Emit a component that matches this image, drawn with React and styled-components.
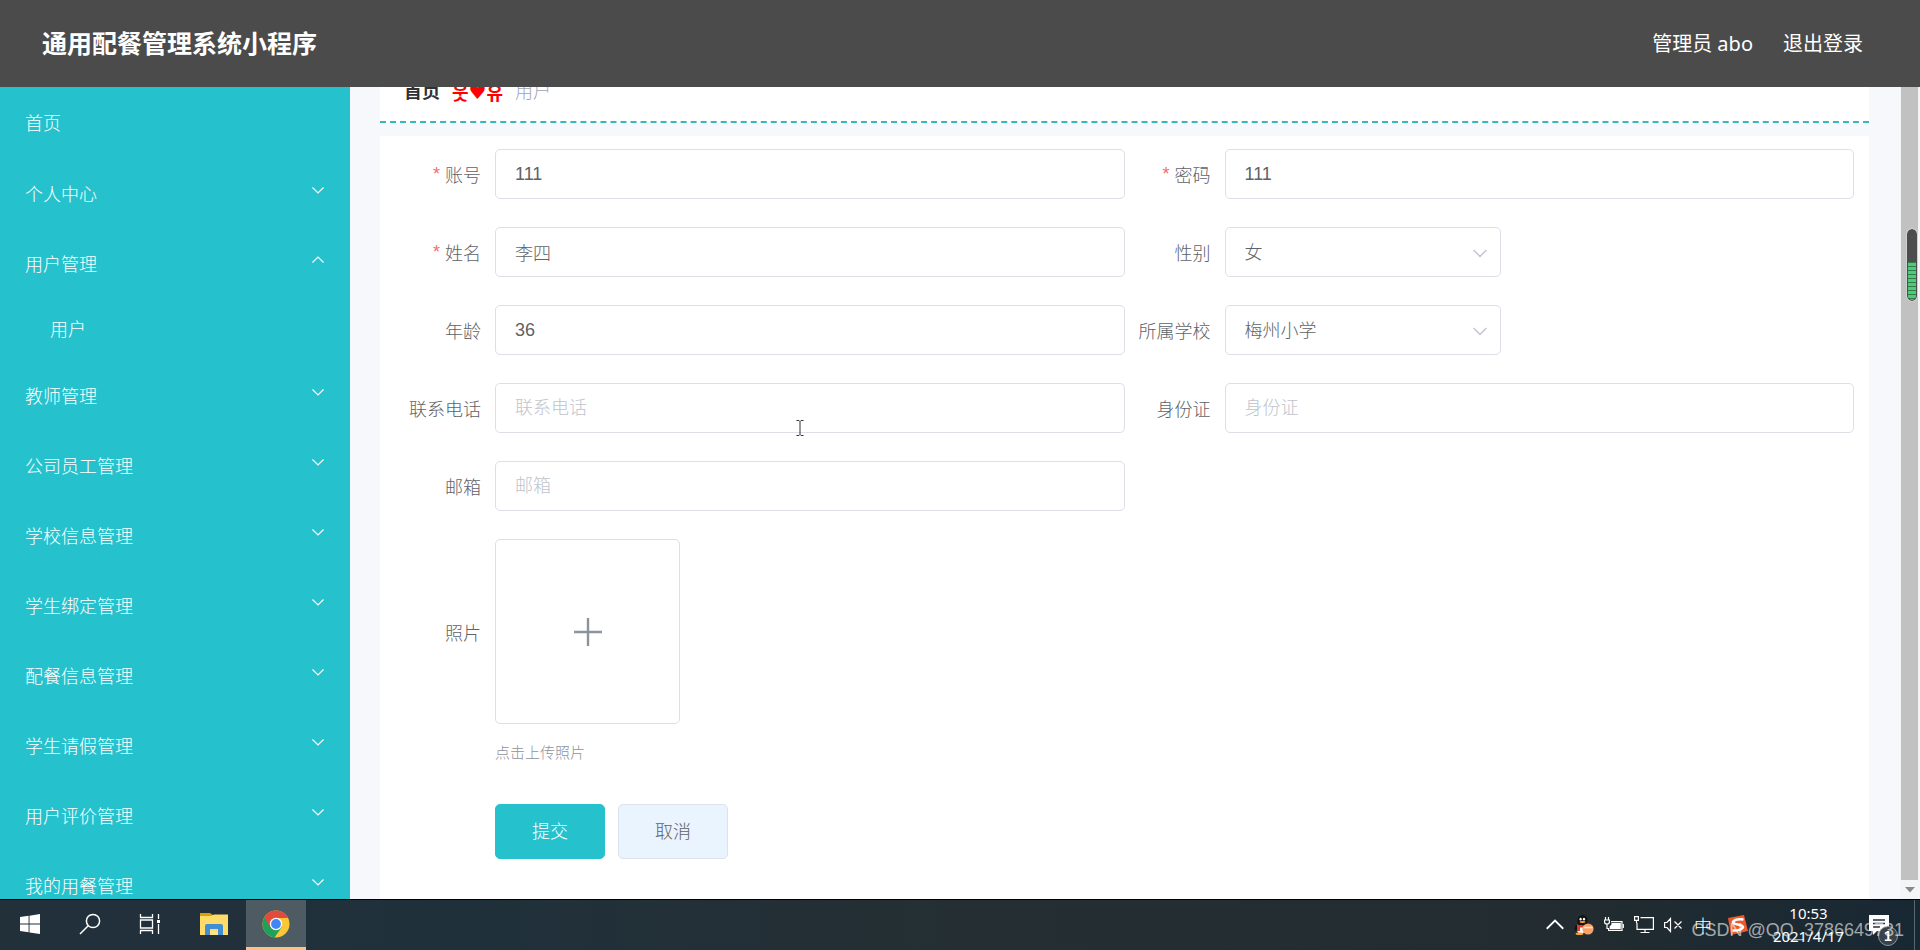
import { useState } from "react";
import styled, { createGlobalStyle } from "styled-components";

const menus = [
  { name: "首页" },
  { name: "个人中心", sub: ["个人信息"] },
  { name: "用户管理", sub: ["用户"] },
  { name: "教师管理", sub: ["教师"] },
  { name: "公司员工管理", sub: ["公司员工"] },
  { name: "学校信息管理", sub: ["学校信息"] },
  { name: "学生绑定管理", sub: ["学生绑定"] },
  { name: "配餐信息管理", sub: ["配餐信息"] },
  { name: "学生请假管理", sub: ["学生请假"] },
  { name: "用户评价管理", sub: ["用户评价"] },
  { name: "我的用餐管理", sub: ["我的用餐"] },
];

const Chevron = ({ up, size = 12 }) => (
  <svg width={size} height={size} viewBox="0 0 12 12" fill="none" stroke="currentColor">
    <path d={up ? "M0.5 8.5L6 3L11.5 8.5" : "M0.5 3.5L6 9L11.5 3.5"} strokeWidth="1.2" />
  </svg>
);

const TextField = ({ id, label, required, ...rest }) => (
  <Field>
    <Label htmlFor={id}>
      {required && <Star>*</Star>}
      {label}
    </Label>
    <Input id={id} {...rest} />
  </Field>
);

const SelectField = ({ id, label, options }) => (
  <Field>
    <Label htmlFor={id}>{label}</Label>
    <SelectBox>
      <Select id={id} defaultValue={options[0]}>
        {options.map((item) => (
          <option key={item}>{item}</option>
        ))}
      </Select>
      <SelectArrow>
        <Chevron size={14} />
      </SelectArrow>
    </SelectBox>
  </Field>
);

const SideMenu = () => {
  const [open, setOpen] = useState("用户管理");
  return (
    <Sidebar>
      {menus.map((menu) => (
        <div key={menu.name}>
          <MenuItem
            type="button"
            $first={!menu.sub}
            onClick={() => setOpen(open === menu.name ? "" : menu.name)}
          >
            {menu.name}
            {menu.sub && (
              <MenuArrow>
                <Chevron up={open === menu.name} />
              </MenuArrow>
            )}
          </MenuItem>
          {open === menu.name &&
            menu.sub?.map((item) => (
              <SubItem key={item} href="#">
                {item}
              </SubItem>
            ))}
        </div>
      ))}
    </Sidebar>
  );
};

const UserForm = () => (
  <Form onSubmit={(e) => e.preventDefault()}>
    <TextField id="account" label="账号" required defaultValue="111" />
    <TextField id="password" label="密码" required defaultValue="111" />
    <TextField id="name" label="姓名" required defaultValue="李四" />
    <SelectField id="sex" label="性别" options={["女", "男"]} />
    <TextField id="age" label="年龄" defaultValue="36" />
    <SelectField id="school" label="所属学校" options={["梅州小学"]} />
    <TextField id="phone" label="联系电话" placeholder="联系电话" />
    <TextField id="idcard" label="身份证" placeholder="身份证" />
    <WideRow>
      <TextField id="email" label="邮箱" placeholder="邮箱" />
    </WideRow>
    <WideRow>
      <Field>
        <Label htmlFor="photo" $tall>
          照片
        </Label>
        <div>
          <Upload>
            <input id="photo" type="file" />
            <svg width="30" height="30" viewBox="0 0 30 30" stroke="#8c939d" strokeWidth="2.4">
              <path d="M15 1V29M1 15H29" />
            </svg>
          </Upload>
          <Hint>点击上传照片</Hint>
        </div>
      </Field>
    </WideRow>
    <Buttons>
      <Button type="submit" $primary>
        提交
      </Button>
      <Button type="button">取消</Button>
    </Buttons>
  </Form>
);

const WindowsIcon = () => (
  <svg width="20" height="20" viewBox="0 0 20 20" fill="#fff">
    <path d="M0 3L8.6 1.8V9.5H0zM9.5 1.7L20 0V9.5H9.5zM0 10.4H8.6V18.2L0 17zM9.5 10.4H20V20L9.5 18.4z" />
  </svg>
);

const SearchIcon = () => (
  <svg width="22" height="22" viewBox="0 0 22 22" fill="none" stroke="#fff" strokeWidth="1.5">
    <circle cx="14" cy="8" r="6.6" />
    <path d="M9.2 12.8L1 21" />
  </svg>
);

const TaskViewIcon = () => (
  <svg width="22" height="20" viewBox="0 0 22 20" fill="none" stroke="#fff" strokeWidth="1.3">
    <path d="M1.5 0V3.5H13.5V0M1.5 20V16.5H13.5V20M1.5 6H13.5V14H1.5zM19.5 0V5M19.5 10V20" />
    <path d="M18 6H21V9H18z" fill="#fff" stroke="none" />
  </svg>
);

const FolderIcon = () => (
  <svg width="28" height="24" viewBox="0 0 28 24">
    <path d="M0 1H10L13 3H27V10H0z" fill="#d9a200" />
    <path d="M0 4H11L14 2.5H28V23H0z" fill="#ffdc69" />
    <path d="M5 23V14Q5 12 7 12H21Q23 12 23 14V23H18V17H10V23z" fill="#3f8fd2" />
    <path d="M10 19H18V23H10z" fill="#ffe38a" />
  </svg>
);

const ChromeIcon = () => (
  <svg width="28" height="28" viewBox="0 0 28 28">
    <circle cx="14" cy="14" r="13.5" fill="#fbc734" />
    <path d="M14 14L2.3 7.3A13.5 13.5 0 0 0 12.5 27.4L19.8 17z" fill="#1fa15a" />
    <path d="M2.3 7.3A13.5 13.5 0 0 1 26 8H14L8.2 17.2z" fill="#e34a3e" />
    <circle cx="14" cy="14" r="6.2" fill="#fff" />
    <circle cx="14" cy="14" r="4.9" fill="#4285f4" />
  </svg>
);

const PenguinIcon = () => (
  <svg width="20" height="20" viewBox="0 0 20 20">
    <path d="M2 10Q0 13 1 16Q3 15 4 13z" fill="#111" />
    <ellipse cx="8.5" cy="12" rx="6" ry="7" fill="#111" />
    <ellipse cx="8.5" cy="5.5" rx="5" ry="5.5" fill="#111" />
    <ellipse cx="7" cy="14.5" rx="4" ry="4" fill="#fff" />
    <ellipse cx="6.6" cy="4.2" rx="1.1" ry="1.4" fill="#fff" />
    <ellipse cx="10" cy="4.2" rx="1.1" ry="1.4" fill="#fff" />
    <ellipse cx="8.5" cy="7" rx="3" ry="1.1" fill="#f5a623" />
    <path d="M3 9Q8 12 13.5 9V11Q9 13 6 12.5V16H3z" fill="#e5342b" />
    <ellipse cx="5.5" cy="18.8" rx="4" ry="1.2" fill="#f5a623" />
    <circle cx="14" cy="14" r="5.6" fill="#f9a066" />
    <path d="M9.5 12.5H18.5" fill="none" stroke="#fde3cd" strokeWidth="1.6" />
  </svg>
);

const BatteryIcon = () => (
  <svg width="20" height="16" viewBox="0 0 20 16" fill="none" stroke="#fff" strokeWidth="1.2">
    <path d="M7 4.6H18V13.5H4.6V11" />
    <path d="M8 6.5H16.2V11.7H6.2V9.5L8 8z" fill="#fff" />
    <path d="M19.3 7V11M1.5 0V3M4.5 0V3M0.6 3H5.4V5Q5.4 7 3 7Q0.6 7 0.6 5zM3 7V11.5H5" />
  </svg>
);

const MonitorIcon = () => (
  <svg width="20" height="18" viewBox="0 0 20 18" fill="none" stroke="#fff" strokeWidth="1.2">
    <path d="M6.5 1.6H19.4V13.4H3V7M11 13.4V16.5M6.500 16.5H15.5" />
    <path d="M0.6 0.6H4.4V4.4H0.6zM2.5 4.4V7" />
  </svg>
);

const SpeakerIcon = () => (
  <svg width="18" height="16" viewBox="0 0 18 16" fill="none" stroke="#fff" strokeWidth="1.2">
    <path d="M0.6 5.5H3L6.5 1.5V14.5L3 10.5H0.6zM10.5 4.5L17.5 11.5M17.5 4.5L10.5 11.5" />
  </svg>
);

const SogouIcon = () => (
  <svg width="20" height="20" viewBox="0 0 20 20">
    <path d="M0 3L16 0L20 16L3 20z" fill="#ec5a2c" />
    <path
      d="M15.5 4.500Q7 3.500 5 7Q5.500 9 10 9.500Q15.500 10.500 15 12.500Q12 16 4.500 15.500"
      fill="none"
      stroke="#fff"
      strokeWidth="2.6"
    />
  </svg>
);

const NoticeIcon = () => (
  <svg width="20" height="20" viewBox="0 0 20 20">
    <path d="M0 0H20V16H8L4 20V16H0z" fill="#fff" />
    <path d="M4 5H16M4 8.5H16M4 12H11" stroke="#22303a" strokeWidth="1.3" />
  </svg>
);

const App = () => (
  <Page>
    <GlobalStyle />
    <Header>
      <Title>通用配餐管理系统小程序</Title>
      <HeaderRight>
        <span>管理员 abo</span>
        <a href="#">退出登录</a>
      </HeaderRight>
    </Header>
    <Body>
      <SideMenu />
      <Content>
        <Breadcrumb>
          <b>首页</b>
          <Separator>
            웃<Heart>{"\u2665\uFE0E"}</Heart>유
          </Separator>
          <span>用户</span>
        </Breadcrumb>
        <UserForm />
        <Cursor width="8" height="16" viewBox="0 0 8 16" fill="none" stroke="#333">
          <path d="M0.5 0.5H3L4 1.5L5 0.5H7.5M4 1.5V14.5M0.5 15.5H3L4 14.5L5 15.5H7.5" />
        </Cursor>
      </Content>
      <Scrollbar>
        <ScrollThumb>
          <Meter />
        </ScrollThumb>
        <ScrollArrow>
          <svg width="10" height="6" viewBox="0 0 10 6" fill="#8a8a8a">
            <path d="M0 0H10L5 5.5z" />
          </svg>
        </ScrollArrow>
      </Scrollbar>
    </Body>
    <Taskbar>
      <TaskButton type="button" aria-label="开始">
        <WindowsIcon />
      </TaskButton>
      <TaskButton type="button" aria-label="搜索">
        <SearchIcon />
      </TaskButton>
      <TaskButton type="button" aria-label="任务视图">
        <TaskViewIcon />
      </TaskButton>
      <Pinned>
        <TaskButton type="button" aria-label="文件资源管理器">
          <FolderIcon />
        </TaskButton>
        <TaskButton type="button" aria-label="Chrome" $active>
          <ChromeIcon />
        </TaskButton>
      </Pinned>
      <Tray>
        <Chevron up size={18} />
        <PenguinIcon />
        <BatteryIcon />
        <MonitorIcon />
        <SpeakerIcon />
        <Ime>中</Ime>
        <SogouIcon />
      </Tray>
      <Clock>
        <span>10:53</span>
        <span>2021/4/17</span>
      </Clock>
      <Notice>
        <NoticeIcon />
        <Badge>1</Badge>
      </Notice>
      <Watermark>CSDN @QQ_3786649731</Watermark>
    </Taskbar>
  </Page>
);

export default App;

const GlobalStyle = createGlobalStyle`
  * {
    box-sizing: border-box;
  }

  body {
    margin: 0;
    font-family: "Liberation Sans", "Noto Sans CJK SC", sans-serif;
    font-size: 18px;
    font-weight: 300;
    color: #606266;
  }

  button, input, select {
    font: inherit;
  }

  a {
    color: inherit;
    text-decoration: none;
  }

  svg {
    display: block;
    flex: none;
  }
`;

const Page = styled.div`
  display: flex;
  flex-direction: column;
  height: 100vh;
  overflow: hidden;
`;

const Header = styled.header`
  display: flex;
  flex: none;
  justify-content: space-between;
  align-items: center;
  height: 87px;
  padding: 0 57px 3px 42px;
  background: #4b4b4b;
  color: #fff;
`;

const Title = styled.h1`
  margin: 0;
  font-size: 25px;
  font-weight: 700;
`;

const HeaderRight = styled.div`
  display: flex;
  gap: 30px;
  font-family: "Noto Sans", "Noto Sans CJK SC", sans-serif;
  font-size: 20px;
  font-weight: 400;
`;

const Body = styled.div`
  display: flex;
  flex: 1;
  min-height: 0;
  overflow: hidden;
`;

const Sidebar = styled.nav`
  flex: none;
  width: 350px;
  overflow: hidden;
  background: #25c2ce;
  color: #fff;
`;

const MenuItem = styled.button`
  display: flex;
  justify-content: space-between;
  align-items: center;
  width: 100%;
  height: ${(props) => (props.$first ? 72 : 70)}px;
  padding: 0 26px 2px 25px;
  border: 0;
  background: none;
  color: inherit;
`;

const MenuArrow = styled.span`
  padding-bottom: 6px;
`;

const SubItem = styled.a`
  display: flex;
  align-items: center;
  height: 62px;
  padding: 0 0 4px 50px;
`;

const Content = styled.main`
  position: relative;
  display: flex;
  flex: 1;
  flex-direction: column;
  min-width: 0;
  padding: 0 31px 0 30px;
  background: #f6f8fb;
`;

const Breadcrumb = styled.div`
  display: flex;
  gap: 12px;
  align-items: center;
  flex: none;
  height: 60px;
  margin: -24px 0 13px;
  padding: 0 24px;
  border-bottom: 2px dashed #35b9bd;
  background: #fff;
  color: #a0a3b5;
  line-height: 18px;

  b {
    color: #303133;
    font-weight: 700;
  }
`;

const Separator = styled.span`
  display: flex;
  align-items: center;
  color: #f00;
  font-family: "Noto Sans CJK KR", sans-serif;
  font-weight: 700;
`;

const Heart = styled.span`
  font-family: "DejaVu Sans", sans-serif;
  font-size: 20px;
`;

const Form = styled.form`
  display: grid;
  grid-template-columns: 1fr 1fr;
  flex: 1;
  row-gap: 28px;
  align-content: start;
  padding: 13px 15px 40px;
  background: #fff;
`;

const WideRow = styled.div`
  display: grid;
  grid-column: 1 / -1;
  grid-template-columns: 1fr 1fr;
`;

const Field = styled.div`
  display: grid;
  grid-template-columns: 100px 1fr;
`;

const Label = styled.label`
  display: flex;
  justify-content: flex-end;
  align-items: center;
  height: ${(props) => (props.$tall ? 185 : 50)}px;
  padding-right: 14px;
  white-space: nowrap;
`;

const Star = styled.span`
  margin-right: 5px;
  color: #f56c6c;
`;

const Input = styled.input`
  width: 100%;
  height: 50px;
  padding: 0 19px;
  border: 1px solid #dcdfe6;
  border-radius: 5px;
  outline: none;
  background: #fff;
  color: #606266;

  &::placeholder {
    color: #c0c4cc;
  }
`;

const SelectBox = styled.div`
  position: relative;
  width: 276px;
`;

const Select = styled.select`
  width: 100%;
  height: 50px;
  padding: 2px 19px 0;
  border: 1px solid #dcdfe6;
  border-radius: 5px;
  outline: none;
  appearance: none;
  background: #fff;
  color: #606266;
`;

const SelectArrow = styled.span`
  position: absolute;
  top: 19px;
  right: 14px;
  color: #c0c4cc;
  pointer-events: none;
`;

const Upload = styled.label`
  display: flex;
  justify-content: center;
  align-items: center;
  width: 185px;
  height: 185px;
  border: 1px solid #dcdfe6;
  border-radius: 5px;
  cursor: pointer;

  input {
    display: none;
  }
`;

const Hint = styled.p`
  margin: 18px 0 0;
  color: #8e929b;
  font-size: 15px;
  line-height: 22px;
`;

const Buttons = styled.div`
  display: flex;
  grid-column: 1 / -1;
  gap: 13px;
  margin-top: 12px;
  padding-left: 100px;
`;

const Button = styled.button`
  width: 110px;
  height: 55px;
  padding: 0 0 4px;
  border: 1px solid ${(props) => (props.$primary ? "#25c2ce" : "#dce3ee")};
  border-radius: 5px;
  background: ${(props) => (props.$primary ? "#25c2ce" : "#eaf4fe")};
  color: ${(props) => (props.$primary ? "#fff" : "#606266")};
`;

const Cursor = styled.svg`
  position: absolute;
  top: 333px;
  left: 446px;
`;

const Scrollbar = styled.div`
  display: flex;
  flex: none;
  flex-direction: column;
  width: 20px;
  padding: 0 2px 0 1px;
  background: #f4f5f7;
`;

const ScrollThumb = styled.div`
  flex: 1;
  padding: 142px 1px 0 6px;
  background: #c1c1c1;
`;

const Meter = styled.div`
  height: 72px;
  border: 1px solid #4d4d4d;
  border-radius: 5px;
  outline: 1px solid #d0d0d0;
  background:
    linear-gradient(#4d4d4d 32px, transparent 32px),
    repeating-linear-gradient(#2f7d4b 0 1px, #4fca78 1px 4px);
`;

const ScrollArrow = styled.div`
  display: flex;
  justify-content: center;
  align-items: center;
  height: 19px;
`;

const Taskbar = styled.footer`
  position: relative;
  display: flex;
  flex: none;
  height: 51px;
  border-top: 1px solid #000;
  background: linear-gradient(90deg, #22303a, #20303a 25%, #252f33 50%, #232c30 80%, #182833);
  color: #fff;
`;

const TaskButton = styled.button`
  display: flex;
  justify-content: center;
  align-items: center;
  width: 60px;
  padding: 0;
  border: 0;
  border-bottom: 3px solid ${(props) => (props.$active ? "#ffc083" : "transparent")};
  background: ${(props) => (props.$active ? "#4f5b63" : "none")};
`;

const Pinned = styled.div`
  display: flex;
  gap: 2px;
  margin-left: 4px;
`;

const Tray = styled.div`
  display: flex;
  gap: 10px;
  align-items: center;
  margin-left: auto;
`;

const Ime = styled.span`
  width: 26px;
  padding-left: 2px;
`;

const Clock = styled.div`
  display: flex;
  flex-direction: column;
  align-items: center;
  width: 121px;
  padding-top: 2px;
  font-family: "Noto Sans", sans-serif;
  font-size: 15px;
  font-weight: 400;
  line-height: 23px;
`;

const Notice = styled.div`
  position: relative;
  width: 46px;
  margin-right: 5px;
  padding-top: 15px;
  border-right: 1px solid #5a666e;
`;

const Badge = styled.span`
  position: absolute;
  top: 26px;
  left: 9px;
  width: 20px;
  height: 20px;
  border: 1px solid #8d9499;
  border-radius: 50%;
  background: #3a4248;
  font-size: 14px;
  font-weight: 700;
  line-height: 18px;
  text-align: center;
`;

const Watermark = styled.span`
  position: absolute;
  right: 16px;
  bottom: 9px;
  color: rgba(255, 255, 255, 0.6);
  line-height: 22px;
`;
